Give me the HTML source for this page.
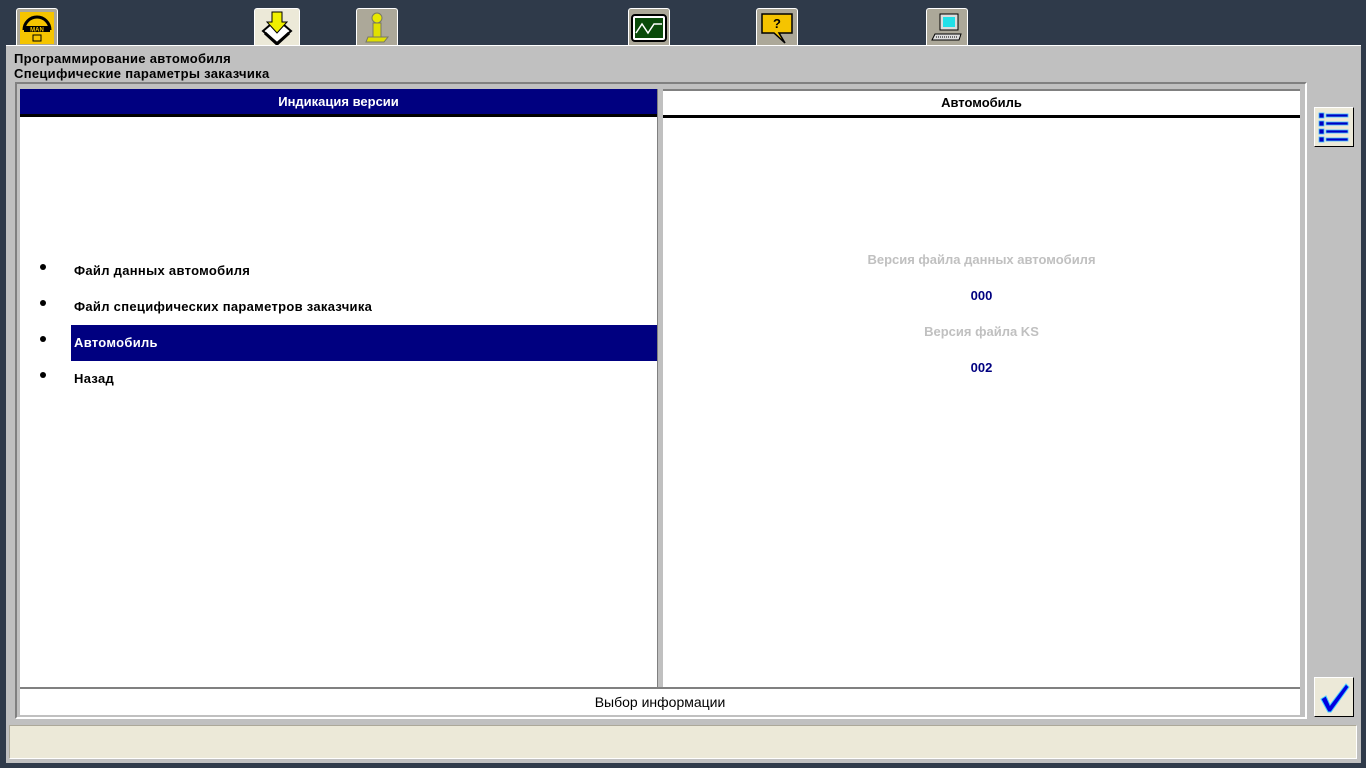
<!DOCTYPE html>
<html><head><meta charset="utf-8"><style>
*{margin:0;padding:0;box-sizing:border-box}
body{width:1366px;height:768px;background:#2f3a4a;position:relative;overflow:hidden;font-family:"Liberation Sans",sans-serif;font-size:13px;font-weight:bold;color:#000}
.a{position:absolute}
.tab{position:absolute;top:8px;width:42px;height:38px;background:#aca899;border:1px solid #fff;border-bottom:none;border-radius:3px 3px 0 0;display:flex;align-items:center;justify-content:center}
.main{left:6px;top:45px;width:1355px;height:718px;background:#c0c0c0;border-top:1px solid #fff}
.t{font-size:13px;letter-spacing:.3px}
</style></head><body>
<div class="tab" style="left:16px"><svg width="36" height="32"><rect x="1" y="0" width="34" height="32" fill="#f5c400"/><path d="M5 18 A13 13 0 0 1 31 18" stroke="#000" stroke-width="3" fill="none"/><rect x="5" y="14" width="26" height="6" fill="#000"/><text x="18" y="19.5" font-size="6" fill="#f5c400" text-anchor="middle" font-family="Liberation Sans">MAN</text><rect x="14" y="23" width="8" height="6" fill="none" stroke="#000"/></svg></div>
<div class="tab" style="left:254px;width:46px;background:#ece9d8"><svg width="36" height="34"><path d="M4 20 L18 8 L32 20 L18 32Z" fill="#fff" stroke="#000" stroke-width="2"/><path d="M6 22 L18 33 L30 22" stroke="#000" stroke-width="3" fill="none"/><path d="M13 1 H23 V11 H28 L18 22 L8 11 H13Z" fill="#f0f000" stroke="#000"/></svg></div>
<div class="tab" style="left:356px"><svg width="30" height="34"><circle cx="15" cy="7" r="5" fill="#e8e800" stroke="#776"/><rect x="11" y="12" width="8" height="14" fill="#e0e000" stroke="#776"/><path d="M6 26 H26 L22 31 H4Z" fill="#e0e000" stroke="#776"/></svg></div>
<div class="tab" style="left:628px"><svg width="36" height="30"><rect x="1" y="2" width="34" height="26" rx="3" fill="#fff" stroke="#000" stroke-width="2"/><rect x="4" y="5" width="28" height="20" fill="#0a4a0a"/><path d="M5 20 L11 11 L17 20 L23 11 L31 11" stroke="#fff" fill="none" stroke-width="1.5"/></svg></div>
<div class="tab" style="left:756px"><svg width="36" height="34"><path d="M3 3 H33 V22 H20 L26 32 L15 22 H3Z" fill="#f5c400" stroke="#000" stroke-width="1.5"/><text x="18" y="17" font-size="13" text-anchor="middle" font-family="Liberation Sans" font-weight="bold">?</text></svg></div>
<div class="tab" style="left:926px"><svg width="36" height="32"><rect x="11" y="2" width="18" height="16" fill="#ddd" stroke="#000"/><rect x="14" y="5" width="12" height="10" fill="#22e0e8"/><path d="M6 22 H32 L30 28 H3Z" fill="#ddd" stroke="#000"/><path d="M7 25 H29" stroke="#000" stroke-dasharray="1 1"/></svg></div>

<div class="a main">
<div class="a t" style="left:8px;top:5px">Программирование автомобиля</div>
<div class="a t" style="left:8px;top:20px">Специфические параметры заказчика</div>
<div class="a" style="left:9px;top:36px;width:1292px;height:637px;border:2px solid;border-color:#808080 #fff #fff #808080"></div>
<div class="a" style="left:14px;top:43px;width:637px;height:600px;background:#fff">
 <div class="a" style="left:0;top:0;width:637px;height:28px;background:#000080;border-bottom:3px solid #000;color:#fff;text-align:center;line-height:26px">Индикация версии</div>
 <div class="a" style="left:20px;top:175px;width:6px;height:6px;border-radius:3px;background:#000"></div>
 <div class="a t" style="left:54px;top:174px">Файл данных автомобиля</div>
 <div class="a" style="left:20px;top:211px;width:6px;height:6px;border-radius:3px;background:#000"></div>
 <div class="a t" style="left:54px;top:210px">Файл специфических параметров заказчика</div>
 <div class="a" style="left:51px;top:236px;width:586px;height:36px;background:#000080"></div>
 <div class="a" style="left:20px;top:247px;width:6px;height:6px;border-radius:3px;background:#000"></div>
 <div class="a t" style="left:54px;top:246px;color:#fff">Автомобиль</div>
 <div class="a" style="left:20px;top:283px;width:6px;height:6px;border-radius:3px;background:#000"></div>
 <div class="a t" style="left:54px;top:282px">Назад</div>
</div>
<div class="a" style="left:651px;top:43px;width:6px;height:600px;background:#c0c0c0;border-left:1px solid #808080"></div>
<div class="a" style="left:657px;top:43px;width:637px;height:600px;background:#fff;border-top:2px solid #808080">
 <div class="a" style="left:0;top:0;width:637px;height:27px;border-bottom:3px solid #000;text-align:center;line-height:24px">Автомобиль</div>
 <div class="a" style="left:0;top:161px;width:637px;text-align:center;color:#c0c0c0">Версия файла данных автомобиля</div>
 <div class="a" style="left:0;top:197px;width:637px;text-align:center;color:#000080">000</div>
 <div class="a" style="left:0;top:233px;width:637px;text-align:center;color:#c0c0c0">Версия файла KS</div>
 <div class="a" style="left:0;top:269px;width:637px;text-align:center;color:#000080">002</div>
</div>
<div class="a" style="left:14px;top:641px;width:1280px;height:28px;background:#fff;border-top:2px solid #808080;text-align:center;line-height:26px;font-weight:normal;font-family:'Liberation Sans Narrow','Liberation Sans',sans-serif;font-size:14px">Выбор информации</div>
<div class="a" style="left:1308px;top:61px;width:40px;height:40px;background:#ece9d8;border:1px solid #000;border-top-color:#fff;border-left-color:#fff"><svg width="38" height="38"><g fill="#0000c0" stroke="#40c0ff" stroke-width=".8"><rect x="4" y="5" width="5" height="5"/><rect x="11" y="6" width="22" height="3"/><rect x="4" y="13" width="5" height="5"/><rect x="11" y="14" width="22" height="3"/><rect x="4" y="21" width="5" height="5"/><rect x="11" y="22" width="22" height="3"/><rect x="4" y="29" width="5" height="5"/><rect x="11" y="30" width="22" height="3"/></g></svg></div>
<div class="a" style="left:1308px;top:631px;width:40px;height:40px;background:#ece9d8;border:1px solid #000;border-top-color:#fff;border-left-color:#fff"><svg width="38" height="38"><path d="M6 21 L11 18 L15 27 L31 6 L34 9 L16 34 L13 34Z" fill="#0000e0" stroke="#40d0ff"/></svg></div>
<div class="a" style="left:3px;top:679px;width:1348px;height:34px;background:#ece9d8;border:1px solid;border-color:#aca899 #fff #fff #aca899"></div>
</div>
</body></html>
